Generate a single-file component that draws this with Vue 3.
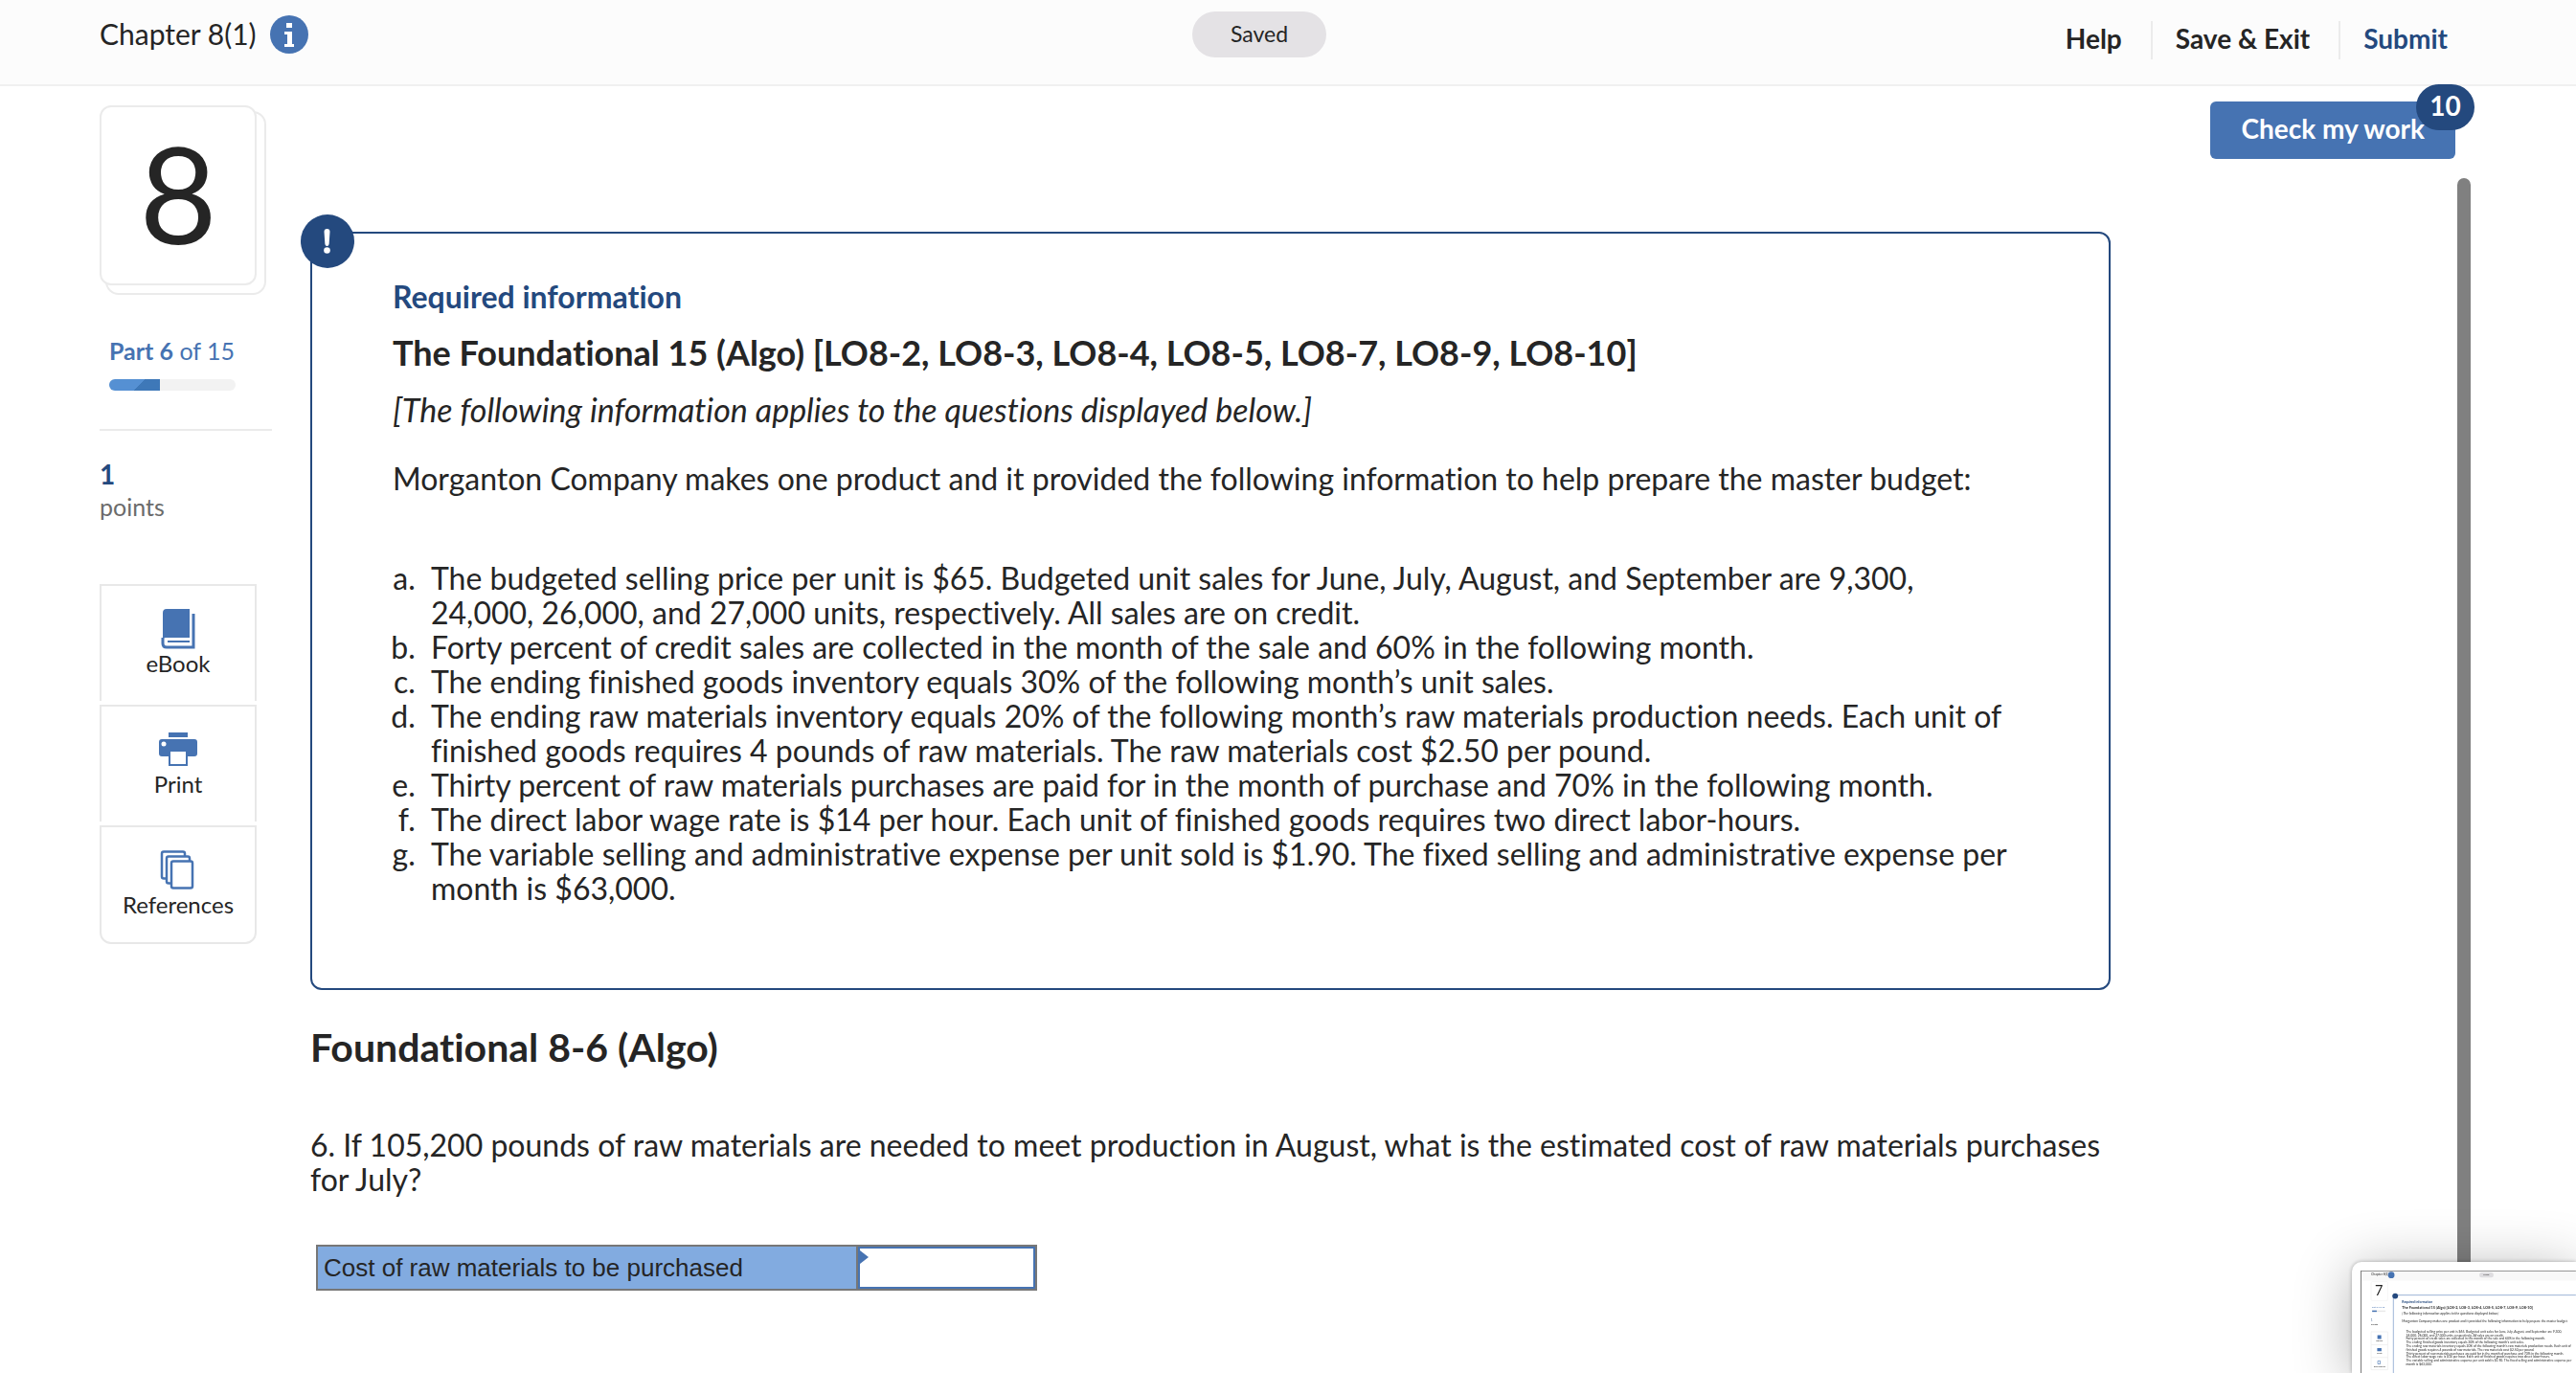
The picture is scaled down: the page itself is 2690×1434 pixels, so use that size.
<template>
  <header class="header">
    <div class="header-left">
      <h1 class="chapter">Chapter 8(1)</h1>
      <button class="info-btn" type="button" aria-label="Assignment information">
        <svg viewBox="0 0 40 40" width="40" height="40">
          <circle cx="20" cy="20" r="20" fill="#4673b2" />
          <path d="M17 8h6v5h-6zM15 17h8v13h2v3H15v-3h3V20h-3z" fill="#fff" />
        </svg>
      </button>
    </div>
    <span class="saved">Saved</span>
    <nav class="header-nav">
      <button type="button">Help</button>
      <button type="button">Save &amp; Exit</button>
      <button type="button" class="submit">Submit</button>
    </nav>
  </header>

  <div class="body">
    <aside class="sidebar">
      <div class="number-stack">
        <div class="number-card">8</div>
      </div>
      <div class="part">
        <p class="part-text"><b>Part 6</b> of 15</p>
        <div class="progress">
          <div class="progress-fill" :style="{ width: progress + '%' }"></div>
        </div>
      </div>
      <div class="points">
        <b>1</b>
        <span>points</span>
      </div>
      <div class="tools">
        <button type="button" class="tool">
          <svg viewBox="0 0 40 42" width="40" height="42">
            <path d="M6 0h26v30H7q-3 0-3 2V4q0-4 4-4z" fill="#4673b2" />
            <path d="M4 30v6q0 4 4 4h28V5" fill="none" stroke="#4673b2" stroke-width="3" stroke-linejoin="miter" />
            <path d="M32 31H10q-4 0-4 3t4 4h24V31z" fill="#fff" />
            <path d="M9 33h23v2H9z" fill="#4673b2" />
          </svg>
          eBook
        </button>
        <button type="button" class="tool">
          <svg viewBox="0 0 40 42" width="40" height="42">
            <path d="M10 3h20v5H10z" fill="#4673b2" />
            <path d="M3 10h34q3 0 3 3v12q0 3-3 3h-7v10H10V28H3q-3 0-3-3V13q0-3 3-3z" fill="#4673b2" />
            <path d="M12 23h16v13H12z" fill="#fff" />
            <circle cx="5" cy="15" r="2.5" fill="#fff" />
          </svg>
          Print
        </button>
        <button type="button" class="tool">
          <svg viewBox="0 0 40 42" width="40" height="42">
            <g fill="#fff" stroke="#4673b2" stroke-width="2.5">
              <rect x="3" y="1.5" width="24" height="28" rx="2" />
              <rect x="8" y="6.5" width="24" height="28" rx="2" />
              <rect x="13" y="11.5" width="22" height="28" rx="2" />
            </g>
          </svg>
          References
        </button>
      </div>
    </aside>

    <main class="content">
      <section class="required">
        <svg class="required-badge" viewBox="0 0 56 56" width="56" height="56">
          <circle cx="28" cy="28" r="28" fill="#24497e" />
          <path d="M24.500 18q0-3 3-3t3 3l-.8 12q-.2 3-2.200 3t-2.200-3z" fill="#fff" />
          <circle cx="27.500" cy="37.500" r="3.300" fill="#fff" />
        </svg>
        <h2 class="required-label">Required information</h2>
        <h3 class="required-title">{{ title }}</h3>
        <p class="applies">{{ applies }}</p>
        <p class="intro">{{ intro }}</p>
        <ol class="facts">
          <li v-for="fact in facts" :key="fact">{{ fact }}</li>
        </ol>
      </section>

      <h2 class="question-title">Foundational 8-6 (Algo)</h2>
      <p class="question">
        6. If 105,200 pounds of raw materials are needed to meet production in August, what is the estimated cost of raw
        materials purchases for July?
      </p>

      <table class="answer">
        <tbody>
          <tr>
            <th scope="row"><label for="cost">Cost of raw materials to be purchased</label></th>
            <td><input id="cost" v-model="cost" type="text" /></td>
          </tr>
        </tbody>
      </table>
    </main>

    <div class="side">
      <button type="button" class="check">
        Check my work
        <span class="check-count">10</span>
      </button>
      <div class="scrollbar"></div>
    </div>
  </div>

  <!-- floating preview of the previous question -->
  <div class="preview">
    <svg class="preview-page" viewBox="0 0 2130 1014" width="225" height="107">
      <rect width="2130" height="100" fill="#f8f8f8" />
      <path d="M0 1014V0H2130" fill="none" stroke="#777" stroke-width="16" />
      <g fill="#252525" font-size="32">
        <text x="104" y="52">Chapter 8(1)</text>
        <circle cx="303" cy="44" r="32" fill="#4673b2" />
        <rect x="1175" y="20" width="140" height="48" rx="24" fill="#dedde0" />
        <text x="1215" y="52" font-size="22">Saved</text>
        <rect x="104" y="110" width="164" height="188" rx="12" fill="#fff" stroke="#ebebeb" stroke-width="4" />
        <text x="142" y="250" font-size="138">7</text>
        <text x="110" y="374" font-size="25" fill="#4673b2">Part 5 of 15</text>
        <path d="M114 402h132" stroke="#e8e8e8" stroke-width="14" />
        <path d="M114 402h45" stroke="#4673b2" stroke-width="14" />
        <text x="104" y="506" font-size="26" fill="#24497e">1</text>
        <text x="104" y="540" font-size="25">points</text>
        <path d="M104 606h164v376h-164zM104 734h164M104 860h164" fill="#fff" stroke="#ebebeb" stroke-width="6" />
        <path d="M166 640h38v38h-38zM164 768h42v30h-42z" fill="#4673b2" />
        <path d="M170 894h24v30h-24z" fill="none" stroke="#4673b2" stroke-width="6" />
        <g font-size="24" text-anchor="middle">
          <text x="186" y="702">eBook</text>
          <text x="186" y="828">Print</text>
          <text x="186" y="954">References</text>
        </g>
        <path d="M324 1014V243H2130" fill="none" stroke="#4673b2" stroke-width="5" />
        <circle cx="342" cy="252" r="28" fill="#24497e" />
        <text x="410" y="322" font-weight="700" fill="#24497e">Required information</text>
        <text x="410" y="382" font-size="36" font-weight="700">{{ title }}</text>
        <text x="410" y="438" font-size="34" font-style="italic">{{ applies }}</text>
        <text x="410" y="510">{{ intro }}</text>
        <text v-for="(line, i) in previewLines" :key="i" x="450" :y="614 + i * 36">{{ line }}</text>
      </g>
    </svg>
  </div>
</template>

<script setup>
import { ref } from 'vue'

const cost = ref('')
const progress = 40

const title = 'The Foundational 15 (Algo) [LO8-2, LO8-3, LO8-4, LO8-5, LO8-7, LO8-9, LO8-10]'
const applies = '[The following information applies to the questions displayed below.]'
const intro =
  'Morganton Company makes one product and it provided the following information to help prepare the master budget:'

const facts = [
  'The budgeted selling price per unit is $65. Budgeted unit sales for June, July, August, and September are 9,300, 24,000, 26,000, and 27,000 units, respectively. All sales are on credit.',
  'Forty percent of credit sales are collected in the month of the sale and 60% in the following month.',
  'The ending finished goods inventory equals 30% of the following month’s unit sales.',
  'The ending raw materials inventory equals 20% of the following month’s raw materials production needs. Each unit of finished goods requires 4 pounds of raw materials. The raw materials cost $2.50 per pound.',
  'Thirty percent of raw materials purchases are paid for in the month of purchase and 70% in the following month.',
  'The direct labor wage rate is $14 per hour. Each unit of finished goods requires two direct labor-hours.',
  'The variable selling and administrative expense per unit sold is $1.90. The fixed selling and administrative expense per month is $63,000.',
]

// svg text does not wrap, so long facts are cut at the same words as the list
const breaks = ['24,000, 26,000', 'finished goods requires 4', 'month is $63,000']
const previewLines = facts.flatMap((fact) => {
  const at = breaks.map((b) => fact.indexOf(b)).find((n) => n > 0)
  return at ? [fact.slice(0, at), fact.slice(at)] : [fact]
})
</script>

<style>
body {
  background: #fff;
}

#app {
  font-family: Lato, "Liberation Sans", sans-serif;
  font-variant-ligatures: none;
  color: #252525;
}
</style>

<style scoped>
h1,
h2,
h3,
p,
ol {
  margin: 0;
  padding: 0;
}

button {
  font-family: inherit;
  color: inherit;
  background: none;
  border: none;
  padding: 0;
  cursor: pointer;
}

.header {
  display: grid;
  grid-template-columns: 1fr auto 1fr;
  height: 88px;
  padding: 0 104px;
  background: #fcfcfc;
  border-bottom: 2px solid #f0f0f0;
}

.header-left {
  display: flex;
  align-items: flex-start;
  gap: 14px;
  padding-top: 16px;
}

.chapter {
  font-size: 30px;
  font-weight: 400;
  line-height: 38px;
}

.info-btn {
  height: 40px;
}

.info-btn svg {
  display: block;
}

.saved {
  width: 140px;
  height: 48px;
  margin-top: 12px;
  margin-right: 60px;
  border-radius: 24px;
  background: #e4e2e5;
  font-size: 23px;
  line-height: 46px;
  text-align: center;
}

.header-nav {
  display: flex;
  justify-content: flex-end;
  padding-top: 22px;
}

.header-nav button {
  height: 40px;
  padding: 0 30px 4px 24px;
  border-left: 2px solid #ebebeb;
  font-size: 28px;
  font-weight: 700;
  line-height: 36px;
}

.header-nav button:first-child {
  border-left: none;
}

.header-nav .submit {
  color: #24497e;
}

.body {
  display: flex;
  min-height: calc(100vh - 90px);
}

.sidebar {
  width: 180px;
  flex-shrink: 0;
  padding: 20px 0 0 104px;
}

.number-stack {
  position: relative;
  width: 164px;
  height: 188px;
}

.number-stack::before {
  content: '';
  position: absolute;
  box-sizing: border-box;
  inset: 6px -10px -10px 6px;
  border: 2px solid #ebebeb;
  border-radius: 14px;
}

.number-card {
  position: relative;
  box-sizing: border-box;
  height: 100%;
  border: 2px solid #ebebeb;
  border-radius: 12px;
  background: #fff;
  font-size: 140px;
  line-height: 178px;
  text-align: center;
}

.part {
  padding: 52px 38px 40px 10px;
  border-bottom: 2px solid #ebebeb;
}

.part-text {
  font-size: 25px;
  line-height: 32px;
  color: #4673b2;
}

.progress {
  height: 12px;
  margin-top: 14px;
  border-radius: 6px;
  background: #f2f2f2;
  overflow: hidden;
}

.progress-fill {
  height: 100%;
  background: linear-gradient(135deg, #5590d3 57%, #3e78b8 57%);
}

.points {
  display: flex;
  flex-direction: column;
  padding-top: 28px;
  font-size: 25px;
  line-height: 34px;
  color: #6b6b6b;
}

.points b {
  font-size: 28px;
  color: #24497e;
}

.tools {
  display: flex;
  flex-direction: column;
  gap: 4px;
  width: 164px;
  margin-top: 64px;
}

.tool {
  display: flex;
  flex-direction: column;
  align-items: center;
  box-sizing: border-box;
  height: 122px;
  padding-top: 24px;
  border: 2px solid #e8e8e8;
  border-bottom: none;
  font-size: 24px;
  line-height: 30px;
}

.tool:last-child {
  height: 124px;
  border-bottom: 2px solid #e8e8e8;
  border-radius: 0 0 12px 12px;
}

.content {
  flex: 1;
  padding: 152px 0 40px 40px;
  font-size: 32px;
  line-height: 36px;
}

.required {
  position: relative;
  padding: 48px 92px 86px 84px;
  border: 2px solid #24497e;
  border-radius: 12px;
}

.required-badge {
  position: absolute;
  top: -20px;
  left: -12px;
}

.required-label {
  font-size: 32px;
  line-height: 36px;
  color: #24497e;
}

.required-title {
  margin-top: 20px;
  font-size: 36px;
  line-height: 40px;
}

.applies {
  margin-top: 22px;
  font-size: 34px;
  font-style: italic;
}

.intro {
  margin-top: 36px;
}

.facts {
  margin-top: 68px;
  padding-left: 32px;
  list-style: lower-alpha;
}

.facts li {
  padding-left: 8px;
}

.question-title {
  margin-top: 38px;
  font-size: 41px;
  line-height: 44px;
}

.question {
  margin-top: 62px;
}

.answer {
  margin: 50px 0 0 6px;
  border-collapse: collapse;
  font-family: "Liberation Sans", Arial, sans-serif;
  font-size: 26px;
  line-height: 30px;
}

.answer th,
.answer td {
  height: 46px;
  padding: 0;
  border: 2px solid #777;
}

.answer th {
  width: 564px;
  box-sizing: border-box;
  padding-left: 6px;
  background: #82abe0;
  font-weight: 400;
  text-align: left;
}

.answer td {
  position: relative;
  width: 187px;
  box-sizing: border-box;
}

.answer td::before {
  content: '';
  position: absolute;
  top: 4px;
  left: 2px;
  border: 7px solid transparent;
  border-left: 9px solid #4673b2;
  border-right: none;
}

.answer input {
  display: block;
  box-sizing: border-box;
  width: 100%;
  height: 44px;
  padding: 0 12px;
  border: 2px solid #4673b2;
  outline: none;
  font: inherit;
}

.side {
  display: flex;
  flex-direction: column;
  align-items: flex-end;
  width: 376px;
  flex-shrink: 0;
  padding: 16px 110px 0 0;
}

.check {
  position: relative;
  height: 60px;
  margin-right: 16px;
  padding: 0 32px 4px;
  border-radius: 6px;
  background: #4673b2;
  color: #fff;
  font-size: 28px;
  font-weight: 700;
  line-height: 54px;
}

.check-count {
  position: absolute;
  top: -18px;
  right: -20px;
  width: 61px;
  height: 48px;
  border-radius: 24px;
  background: #24497e;
  line-height: 44px;
}

.scrollbar {
  flex: 1;
  width: 14px;
  margin-top: 20px;
  border-radius: 7px;
  background: #808080;
}

.preview {
  position: fixed;
  right: 0;
  bottom: 0;
  padding: 9px 0 0 9px;
  border-radius: 10px 0 0 0;
  background: #fff;
  box-shadow: 0 0 4px rgba(0, 0, 0, 0.3), 0 8px 60px rgba(0, 0, 0, 0.3);
}

.preview-page {
  display: block;
}
</style>
